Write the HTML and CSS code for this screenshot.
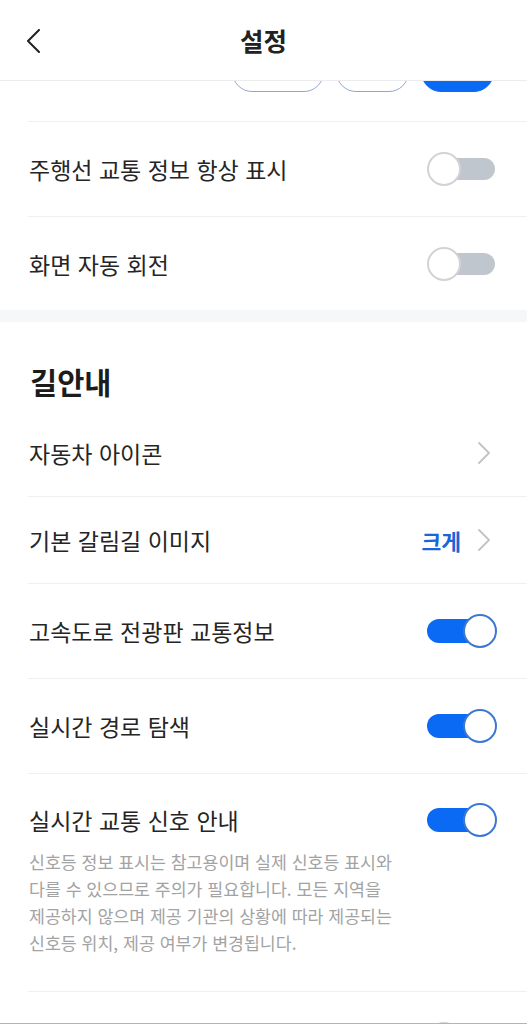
FILE: index.html
```html
<!DOCTYPE html>
<html lang="ko">
<head>
    <meta charset="UTF-8">
    <meta name="viewport" content="width=device-width, initial-scale=1.0">
    <title>설정</title>
    <link rel="stylesheet" href="styles.css">
</head>
<body>
    <div class="header">
        <svg class="back" width="16" height="24" viewBox="0 0 16 24">
            <path d="M14 1 L3 12 L14 23" fill="none" stroke="#222" stroke-width="2" stroke-linecap="round" stroke-linejoin="round"/>
        </svg>
        <h1>설정</h1>
    </div>

    <div class="pill-row">
        <span class="pill wide"></span>
        <span class="pill"></span>
        <span class="pill active"></span>
    </div>

    <div class="section">
        <div class="row">
            <span class="label">주행선 교통 정보 항상 표시</span>
            <span class="toggle"><span class="track"></span><span class="knob"></span></span>
        </div>
        <div class="row last">
            <span class="label">화면 자동 회전</span>
            <span class="toggle"><span class="track"></span><span class="knob"></span></span>
        </div>
    </div>

    <div class="band"></div>

    <div class="section">
        <h2>길안내</h2>
        <div class="row short">
            <span class="label">자동차 아이콘</span>
            <svg class="chevron" width="14" height="22" viewBox="0 0 14 22">
                <path d="M2 1 L12 11 L2 21" fill="none" stroke="#c3c3c3" stroke-width="1.8" stroke-linecap="round" stroke-linejoin="round"/>
            </svg>
        </div>
        <div class="row short">
            <span class="label">기본 갈림길 이미지</span>
            <span class="value">
                <span class="value-text">크게</span>
                <svg class="chevron" width="14" height="22" viewBox="0 0 14 22">
                    <path d="M2 1 L12 11 L2 21" fill="none" stroke="#c3c3c3" stroke-width="1.8" stroke-linecap="round" stroke-linejoin="round"/>
                </svg>
            </span>
        </div>
        <div class="row">
            <span class="label">고속도로 전광판 교통정보</span>
            <span class="toggle on"><span class="track"></span><span class="knob"></span></span>
        </div>
        <div class="row">
            <span class="label">실시간 경로 탐색</span>
            <span class="toggle on"><span class="track"></span><span class="knob"></span></span>
        </div>
        <div class="row tall">
            <div class="row-top">
                <span class="label">실시간 교통 신호 안내</span>
                <span class="toggle on"><span class="track"></span><span class="knob"></span></span>
            </div>
            <p class="desc">신호등 정보 표시는 참고용이며 실제 신호등 표시와<br>다를 수 있으므로 주의가 필요합니다. 모든 지역을<br>제공하지 않으며 제공 기관의 상황에 따라 제공되는<br>신호등 위치, 제공 여부가 변경됩니다.</p>
        </div>
        <div class="row">
            <span class="label"></span>
            <span class="toggle"><span class="track"></span><span class="knob"></span></span>
        </div>
    </div>

    <div class="bottom-edge"></div>
</body>
</html>
```

FILE: styles.css
```css
body, html {
    margin: 0;
    padding: 0;
    background: #fff;
    font-family: "Noto Sans CJK KR", "Noto Sans", sans-serif;
    color: #222;
    overflow: hidden;
}

.header {
    height: 80px;
    border-bottom: 1px solid #ececee;
    display: flex;
    align-items: center;
    justify-content: center;
    position: relative;
}

    .header .back {
        position: absolute;
        left: 25px;
        top: 29px;
    }

    .header h1 {
        margin: 0;
        font-size: 25.5px;
        font-weight: 700;
        line-height: 1;
    }

/* bottom of the option pills, scrolled under the header */
.pill-row {
    height: 40px;
    border-bottom: 1px solid #f0f0f2;
    margin-left: 28px;
    padding-right: 33px;
    display: flex;
    justify-content: flex-end;
    align-items: flex-end;
    gap: 12px;
    overflow: hidden;
}

.pill {
    width: 73px;
    height: 40px;
    margin-bottom: 29px;
    border: 1.5px solid #8fa9cf;
    border-radius: 20px;
    box-sizing: border-box;
    flex: none;
}

    .pill.wide {
        width: 92px;
    }

    .pill.active {
        background: #0a6af3;
        border-color: #0a6af3;
    }

.section {
    background: #fff;
}

    .section h2 {
        margin: 0;
        padding: 42px 0 12px 30px;
        height: 34px;
        font-size: 29.5px;
        line-height: 34px;
        font-weight: 700;
        color: #1c1c1c;
    }

.row {
    height: 94px;
    margin-left: 28px;
    padding: 0 30px 0 1px;
    border-bottom: 1px solid #f0f0f2;
    display: flex;
    align-items: center;
    justify-content: space-between;
}

    .row.last {
        height: 93px;
        border-bottom: none;
    }

    .row.short {
        height: 86px;
    }

    .row.tall {
        height: auto;
        display: block;
        padding-top: 29px;
        padding-bottom: 35px;
    }

.row-top {
    display: flex;
    align-items: center;
    justify-content: space-between;
    height: 34px;
}

.label {
    font-size: 23px;
    line-height: 34px;
    color: #252525;
}

.chevron {
    margin-right: 6px;
    display: block;
}

.value {
    display: flex;
    align-items: center;
    gap: 16px;
}

.value-text {
    font-size: 21.5px;
    font-weight: 700;
    color: #1767d6;
}

.desc {
    margin: 11px 0 0;
    font-size: 17.3px;
    line-height: 27px;
    color: #a3a3a3;
}

.band {
    height: 12px;
    background: #f5f7f9;
}

.toggle {
    width: 70px;
    height: 34px;
    position: relative;
    flex: none;
}

    .toggle .track {
        position: absolute;
        left: 2px;
        right: 2px;
        top: 6px;
        height: 22px;
        border-radius: 11px;
        background: #c0c6ce;
    }

    .toggle .knob {
        position: absolute;
        left: 0;
        top: 0;
        width: 34px;
        height: 34px;
        box-sizing: border-box;
        border-radius: 50%;
        background: #fff;
        border: 2px solid #d3d3d5;
    }

    .toggle.on .track {
        left: 0;
        right: 16px;
        top: 5px;
        height: 24px;
        border-radius: 12px;
        background: #0a6af3;
    }

    .toggle.on .knob {
        left: auto;
        right: 0;
        border-color: #3b78d2;
    }

.bottom-edge {
    position: fixed;
    left: 0;
    right: 0;
    bottom: 0;
    height: 1px;
    background: #b4b4b4;
}
```
